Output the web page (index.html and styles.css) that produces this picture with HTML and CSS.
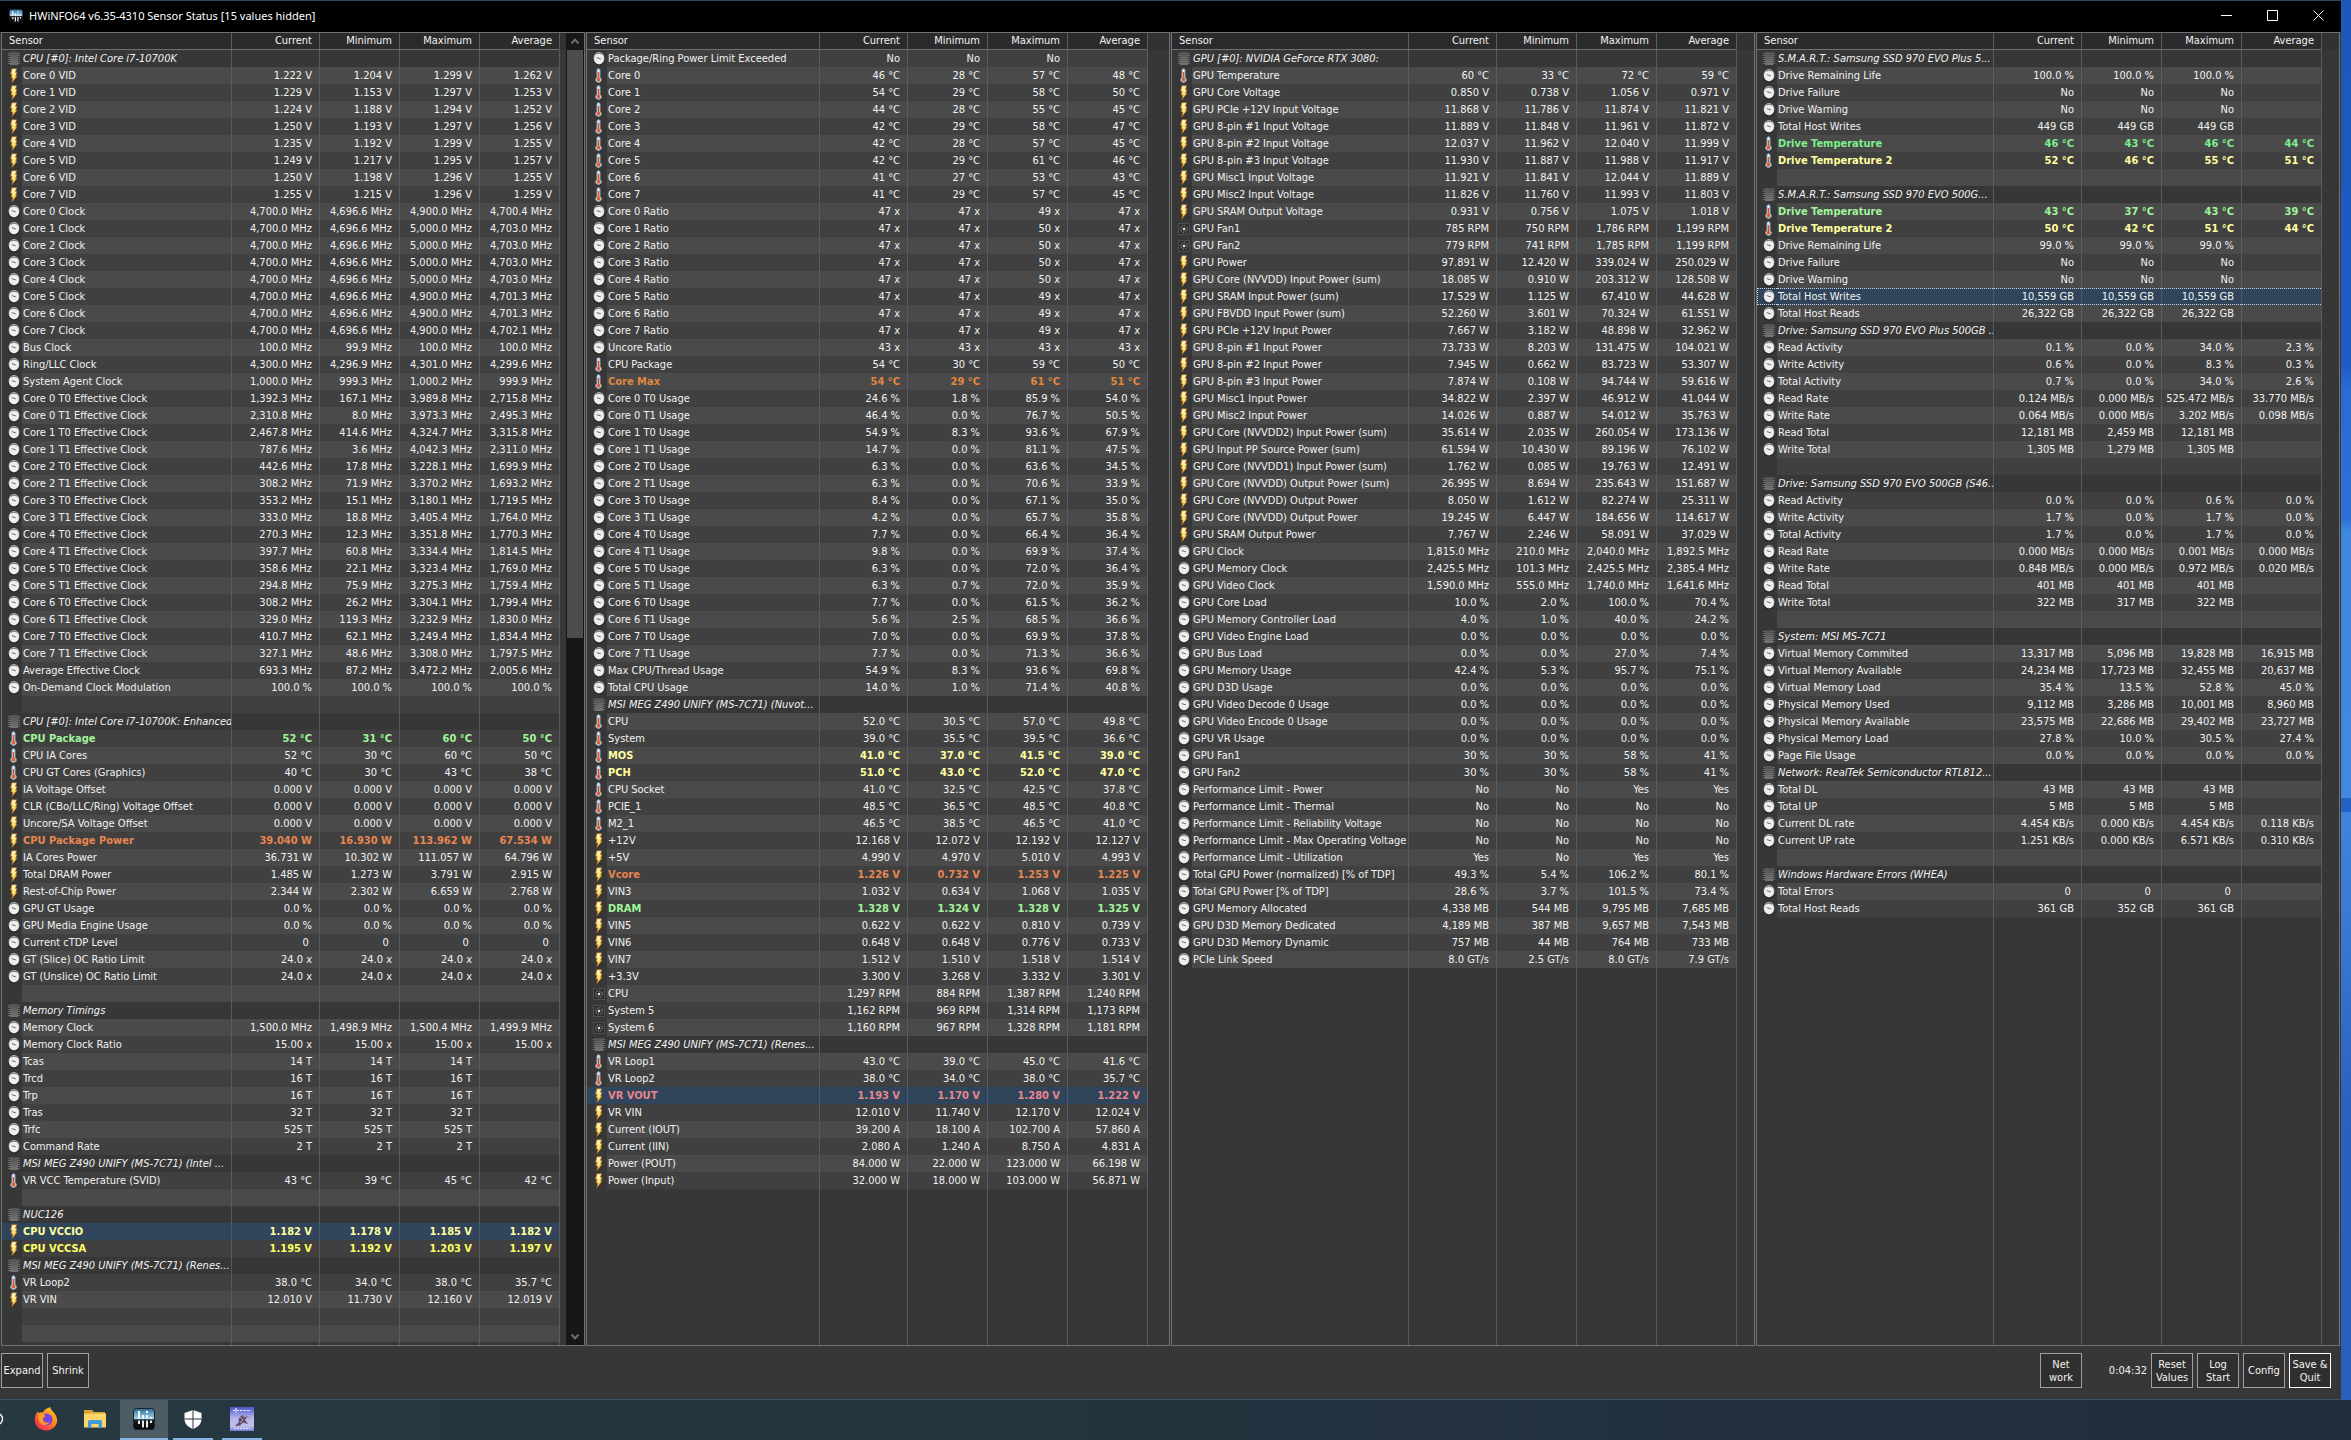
FILE: index.html
```html
<!DOCTYPE html>
<html lang="en">
<head>
<meta charset="utf-8">
<title>HWiNFO64 v6.35-4310 Sensor Status</title>
<link rel="stylesheet" href="styles.css">
</head>
<body>
<svg class="sprite" aria-hidden="true">
  <defs>
    <linearGradient id="bolt-fill" x1="0" y1="0" x2="0" y2="1"><stop offset="0" stop-color="#fff8c0"/><stop offset="1" stop-color="#ffd630"/></linearGradient>
    <linearGradient id="chip-fill" x1="0" y1="0" x2="0" y2="1"><stop offset="0" stop-color="#525252"/><stop offset="1" stop-color="#747474"/></linearGradient>
    <linearGradient id="app-fill" x1="0" y1="0" x2="0" y2="1"><stop offset="0" stop-color="#2c6a94"/><stop offset=".48" stop-color="#a4d2ec"/><stop offset=".54" stop-color="#1a1f24"/><stop offset="1" stop-color="#050505"/></linearGradient>
    <linearGradient id="fox-fill" x1="1" y1="0" x2=".2" y2="1"><stop offset="0" stop-color="#ffe226"/><stop offset=".45" stop-color="#ff8a1c"/><stop offset="1" stop-color="#f0245e"/></linearGradient>
    <linearGradient id="art-fill" x1="0" y1="0" x2="0" y2="1"><stop offset="0" stop-color="#4a56c8"/><stop offset=".45" stop-color="#b6b4ec"/><stop offset=".8" stop-color="#c4bfe8"/><stop offset="1" stop-color="#6f7ce0"/></linearGradient>
  </defs>
  <symbol id="i-clock" viewBox="0 0 12 15">
    <ellipse cx="6" cy="8" rx="6" ry="6.600" fill="#262626"/>
    <ellipse cx="6" cy="7.200" rx="5.400" ry="6.200" fill="#bcbcbc"/>
    <ellipse cx="6" cy="7.800" rx="4.700" ry="5.200" fill="#efefef"/>
    <path d="M3 3Q6 1.600 9 3" stroke="#6a6a6a" stroke-width=".8" fill="none"/>
    <path d="M3.800 6.600 7.800 7.900" stroke="#666" stroke-width="1"/>
  </symbol>
  <symbol id="i-bolt" viewBox="0 0 12 15">
    <path d="M3.900.7H8.600L7.500 4.400H9L7.700 8.200H9L4 14.600 4.800 9.900H3.100L4 6.200H2.500Z" fill="url(#bolt-fill)" stroke="#b0682a" stroke-width=".7"/>
  </symbol>
  <symbol id="i-temp" viewBox="0 0 12 15">
    <path d="M4 1.500Q5.500 0 7 1.500V9.400Q9 11 8 13.200 5.500 15.600 3 13.200 2 11 4 9.400Z" fill="#e6eef4" stroke="#87abc9" stroke-width="1"/>
    <path d="M5.500 4V10" stroke="#e0531f" stroke-width="1.500"/><circle cx="5.500" cy="11.700" r="1.900" fill="#e0602c"/>
  </symbol>
  <symbol id="i-chip" viewBox="0 0 12 15">
    <path d="M1 2V14M11 2V14" stroke="#8e8e8e" stroke-width="1.200" stroke-dasharray="1 1"/>
    <rect x="2" y="1" width="8" height="13" fill="url(#chip-fill)"/>
  </symbol>
  <symbol id="i-fan" viewBox="0 0 12 15">
    <rect x=".5" y="2.500" width="11" height="11" fill="#2f2f2f" stroke="#6a6a6a" stroke-dasharray="1 1"/>
    <circle cx="6" cy="8" r="3.300" fill="none" stroke="#8a8a8a" stroke-width="1.400" stroke-dasharray="1 1.590"/>
    <circle cx="6" cy="8" r="1.300" fill="#f0dede"/>
  </symbol>
  <symbol id="i-app" viewBox="0 0 22 22">
    <rect x=".5" y=".5" width="21" height="21" rx="3" fill="url(#app-fill)" stroke="#16242e"/>
    <path d="M6 3V10.500M10 7V10.500M14 3V5M14 7V10.500M18 9V10.500" stroke="#fff" stroke-width="1.800"/>
    <path d="M6 12.500V16M10 12.500V19.500M14 12.500V19.500M18 12.500V15" stroke="#fff" stroke-width="1.800"/>
  </symbol>
</svg>

<div class="desktop">
  <main class="window">
    <header class="titlebar">
      <svg class="title-icon"><use href="#i-app"/></svg>
      <h1>HWiNFO64 v6.35-4310 Sensor Status [15 values hidden]</h1>
      <div class="caption">
        <button type="button" aria-label="Minimize"><svg viewBox="0 0 11 11"><path d="M0 5.500H11"/></svg></button>
        <button type="button" aria-label="Maximize"><svg viewBox="0 0 11 11"><path d="M.5.5H10.500V10.500H.5Z"/></svg></button>
        <button type="button" aria-label="Close"><svg viewBox="0 0 11 11"><path d="M.5.5 10.500 10.500M10.500.5.5 10.500"/></svg></button>
      </div>
    </header>

    <div class="panels">
      <section class="panel panel-first" id="panel-0">
        <div class="scrollbar">
          <svg class="arrow" viewBox="0 0 17 17"><path d="M5 10.500 8.500 6.500 12 10.500"/></svg>
          <div class="track"><div class="thumb"></div></div>
          <svg class="arrow" viewBox="0 0 17 17"><path d="M5 6.500 8.500 10.500 12 6.500"/></svg>
        </div>
      </section>
      <section class="panel panel-second" id="panel-1"></section>
      <section class="panel" id="panel-2"></section>
      <section class="panel" id="panel-3"></section>
    </div>

    <footer class="toolbar">
      <button type="button">Expand</button>
      <button type="button">Shrink</button>
      <button type="button" class="network">Net<br>work</button>
      <time class="elapsed">0:04:32</time>
      <button type="button">Reset<br>Values</button>
      <button type="button">Log<br>Start</button>
      <button type="button">Config</button>
      <button type="button" class="primary">Save &amp;<br>Quit</button>
    </footer>
  </main>
</div>

<nav class="taskbar">
  <button type="button" class="search" aria-label="Search"><svg viewBox="0 0 4 12"><circle cx="-3" cy="6" r="5.500" fill="none" stroke="#fff" stroke-width="1.400"/></svg></button>
  <button type="button" aria-label="Firefox"><svg viewBox="0 0 24 24">
    <path d="M12 2C14 1 15 .5 16.500 0 16 3 21 5 22.500 10 25 18 19 23.500 12 23.500 5 23.500.5 18.500.8 12.500 1 9 2 6.500 3.500 4.500 4 5 4.500 5.500 5 6.500 6.500 5 8 5 9 5.500 9.500 4 10.500 2.800 12 2Z" fill="url(#fox-fill)"/>
    <circle cx="12.500" cy="12.500" r="6" fill="#7542e5"/><path d="M4 6C8 5 11 7.500 11.500 9.500 9 10 8.500 12 9.500 14 11 16 14 16 16 14 14 19 8 19.500 5.500 15 4 12 4 9 4 6Z" fill="#ff9a22"/>
  </svg></button>
  <button type="button" aria-label="File Explorer"><svg viewBox="0 0 24 24">
    <path d="M1 3H9L11 5H22V20H1Z" fill="#d9a136"/><path d="M1 6.500H23V20.500H1Z" fill="#fbd76a"/><path d="M5 21V14.500Q5 13 6.500 13H17.500Q19 13 19 14.500V21H15.500V17H8.500V21Z" fill="#4597d8"/>
  </svg></button>
  <button type="button" class="active" aria-label="HWiNFO64"><svg><use href="#i-app"/></svg></button>
  <button type="button" class="running" aria-label="Windows Security"><svg viewBox="0 0 24 24">
    <path d="M12 3 20.500 6V12C20.500 17 17 20 12 22 7 20 3.500 17 3.500 12V6Z" fill="#fff"/><path d="M12 3V22M3.500 12H20.500" stroke="#24343f" stroke-width="1"/>
  </svg></button>
  <button type="button" class="running" aria-label="Game"><svg viewBox="0 0 24 24">
    <rect width="24" height="24" fill="url(#art-fill)"/><path d="M3 3.500H21M6 1V6" stroke="#e8ecff" stroke-width="1.200" stroke-dasharray="2.500 1"/><path d="M5 19 9 15 8.500 12 11 9 13 8 14 10.500 18 9 15 13 18 17 13 15.500 10 18.500Z" fill="#5a4b6c"/><path d="M10.500 10 13 13 10 16M18 8 19.500 13" stroke="#c79a94" fill="none"/><path d="M4 21.500H20" stroke="#e8ecff" stroke-dasharray="2 1"/>
  </svg></button>
</nav>
<script src="app.js"></script>
</body>
</html>
```
FILE: styles.css
```css
* { box-sizing: border-box; }

body {
  margin: 0;
  min-height: 100vh;
  display: flex;
  flex-direction: column;
  background: #24343f;
  color: #f2f2f2;
  font: 11px/17px "DejaVu Sans Condensed", "DejaVu Sans", sans-serif;
}

button { font: inherit; color: inherit; padding: 0; border: 0; background: none; }

.sprite { position: absolute; width: 0; height: 0; }

.desktop {
  flex: 1;
  display: flex;
  padding-right: 10px;
  background: linear-gradient(#1d57b8 0, #1f5cc4 26%, #2a6cd2 28%, #2c70d6 37%, #3f88de 38%, #4089de 57%, #2560c4 57%, #2560c4 58%, #3f84dc 58%, #3a78d4 66%, #2a60be 80%, #2a5fbc 100%);
}

.window {
  flex: 1;
  min-width: 0;
  display: flex;
  flex-direction: column;
  background: #373737;
  border-top: 1px solid #2c4a5a;
  border-bottom: 1px solid #3c5666;
}

.titlebar {
  display: flex;
  align-items: center;
  height: 31px;
  padding: 0 0 2px 9px;
  background: #000;
  font-family: "Noto Sans", "Open Sans", sans-serif;
}
.titlebar h1 { margin: 0 0 0 6px; font-size: 11px; font-weight: 400; color: #fff; }
.title-icon { width: 14px; height: 14px; }
.caption { display: flex; margin-left: auto; }
.caption button { width: 46px; height: 28px; display: grid; place-items: center; }
.caption svg { width: 11px; height: 11px; fill: none; stroke: #fff; }

.panels {
  flex: 1;
  display: grid;
  grid-template-columns: repeat(4, minmax(0, 1fr));
  gap: 1px;
  padding: 0 1px;
}
.panel {
  display: flex;
  border: 1px solid #707274;
  min-width: 0;
}

.sensors {
  flex: 1;
  width: 100%;
  min-width: 0;
  table-layout: fixed;
  border-spacing: 0;
  --name: 216px;
}
.panel-first .sensors { --name: 209px; }
.panel-second .sensors { --name: 212px; }
.col-icon { width: 20px; }
.col-name { width: var(--name); }
.col-current { width: 88px; }
.col-value { width: 80px; }

.sensors th, .sensors td {
  height: 17px;
  padding: 0 7px 0 0;
  text-align: right;
  font-weight: 400;
  white-space: nowrap;
  overflow: hidden;
  border-left: 1px solid #585c60;
}
.sensors thead th { background: #2b2b2b; border-bottom: 1px solid #707070; line-height: 16px; }
.sensors thead th:first-child { padding-left: 7px; text-align: left; border-left: 0; }
.sensors thead th:last-child { background: #323232; border-bottom-color: #323232; }

.sensors tbody .icon { padding: 0 0 0 6px; border-left: 0; }
.icon svg { display: block; width: 12px; height: 15px; }
.sensors tbody .name { padding: 0 0 0 1px; text-align: left; border-left: 0; }

.sensors .stripe-a td:not(.icon, .rest) { background: #404040; }
.sensors .stripe-b td:not(.icon, .rest) { background: #4a4a4a; }
.sensors .group td { background: #373737; }
.group .name { font-style: italic; }
.sensors .selected td:not(.rest) { background: #30455b; border-left-color: #48596c; }
.sensors .focused td:not(.rest) { border-top: 1px dotted #c8d4e0; border-bottom: 1px dotted #c8d4e0; line-height: 15px; }
.sensors tbody .focused .icon { border-left: 1px dotted #c8d4e0; padding-left: 5px; }
.focused .icon svg { height: 15px; }
.sensors .filler td { height: auto; }

.green td, .lime td, .yellow td, .pale td, .orange td, .amber td, .pink td { font-weight: 700 !important; }
.green td { color: #7cf08c; }
.lime td { color: #a0f59a; }
.yellow td { color: #ffff64; }
.pale td { color: #ffffa0; }
.orange td { color: #e88652; }
.amber td { color: #e0883e; }
.pink td { color: #e8858c; }

.scrollbar { order: 2; flex: none; width: 18px; display: flex; flex-direction: column; background: #171717; }
.arrow { height: 17px; fill: none; stroke: #6c6c6c; stroke-width: 2; }
.track { flex: 1; padding: 0 1px; }
.thumb { height: 46%; background: #4d4d4d; }

.toolbar {
  display: flex;
  align-items: center;
  gap: 4px;
  padding: 7px 10px 11px 1px;
}
.toolbar button {
  flex: none;
  width: 42px;
  height: 35px;
  line-height: 13px;
  white-space: nowrap;
  background: #2f2f2f;
  border: 1px solid #a0a0a0;
}
.toolbar .primary { border-color: #fff; }
.toolbar .network { margin-left: auto; }
.elapsed { width: 61px; text-align: right; }

.taskbar {
  display: flex;
  gap: 1px;
  height: 40px;
  background: linear-gradient(90deg, #263840, #24343f 50%, #202c3c);
}
.taskbar button { width: 48px; display: grid; place-items: center; border-bottom: 2px solid transparent; }
.taskbar svg { width: 24px; height: 24px; }
.taskbar .search { width: 21px; justify-items: start; }
.taskbar .search svg { width: 4px; height: 12px; }
.taskbar .active { background: #4c5c62; border-bottom-color: #86b4e4; }
.taskbar .active svg { width: 22px; height: 22px; }
.taskbar .running { width: 40px; margin: 0 4px; border-bottom-color: #86b4e4; }
```
FILE: app.js
```
// One line per row: kind|name|current|minimum|maximum|average|classes
// kinds: g group heading, c clock, v voltage or power, t temperature, f fan, - blank
const panels = [`
g|CPU [#0]: Intel Core i7-10700K
v|Core 0 VID|1.222 V|1.204 V|1.299 V|1.262 V
v|Core 1 VID|1.229 V|1.153 V|1.297 V|1.253 V
v|Core 2 VID|1.224 V|1.188 V|1.294 V|1.252 V
v|Core 3 VID|1.250 V|1.193 V|1.297 V|1.256 V
v|Core 4 VID|1.235 V|1.192 V|1.299 V|1.255 V
v|Core 5 VID|1.249 V|1.217 V|1.295 V|1.257 V
v|Core 6 VID|1.250 V|1.198 V|1.296 V|1.255 V
v|Core 7 VID|1.255 V|1.215 V|1.296 V|1.259 V
c|Core 0 Clock|4,700.0 MHz|4,696.6 MHz|4,900.0 MHz|4,700.4 MHz
c|Core 1 Clock|4,700.0 MHz|4,696.6 MHz|5,000.0 MHz|4,703.0 MHz
c|Core 2 Clock|4,700.0 MHz|4,696.6 MHz|5,000.0 MHz|4,703.0 MHz
c|Core 3 Clock|4,700.0 MHz|4,696.6 MHz|5,000.0 MHz|4,703.0 MHz
c|Core 4 Clock|4,700.0 MHz|4,696.6 MHz|5,000.0 MHz|4,703.0 MHz
c|Core 5 Clock|4,700.0 MHz|4,696.6 MHz|4,900.0 MHz|4,701.3 MHz
c|Core 6 Clock|4,700.0 MHz|4,696.6 MHz|4,900.0 MHz|4,701.3 MHz
c|Core 7 Clock|4,700.0 MHz|4,696.6 MHz|4,900.0 MHz|4,702.1 MHz
c|Bus Clock|100.0 MHz|99.9 MHz|100.0 MHz|100.0 MHz
c|Ring/LLC Clock|4,300.0 MHz|4,296.9 MHz|4,301.0 MHz|4,299.6 MHz
c|System Agent Clock|1,000.0 MHz|999.3 MHz|1,000.2 MHz|999.9 MHz
c|Core 0 T0 Effective Clock|1,392.3 MHz|167.1 MHz|3,989.8 MHz|2,715.8 MHz
c|Core 0 T1 Effective Clock|2,310.8 MHz|8.0 MHz|3,973.3 MHz|2,495.3 MHz
c|Core 1 T0 Effective Clock|2,467.8 MHz|414.6 MHz|4,324.7 MHz|3,315.8 MHz
c|Core 1 T1 Effective Clock|787.6 MHz|3.6 MHz|4,042.3 MHz|2,311.0 MHz
c|Core 2 T0 Effective Clock|442.6 MHz|17.8 MHz|3,228.1 MHz|1,699.9 MHz
c|Core 2 T1 Effective Clock|308.2 MHz|71.9 MHz|3,370.2 MHz|1,693.2 MHz
c|Core 3 T0 Effective Clock|353.2 MHz|15.1 MHz|3,180.1 MHz|1,719.5 MHz
c|Core 3 T1 Effective Clock|333.0 MHz|18.8 MHz|3,405.4 MHz|1,764.0 MHz
c|Core 4 T0 Effective Clock|270.3 MHz|12.3 MHz|3,351.8 MHz|1,770.3 MHz
c|Core 4 T1 Effective Clock|397.7 MHz|60.8 MHz|3,334.4 MHz|1,814.5 MHz
c|Core 5 T0 Effective Clock|358.6 MHz|22.1 MHz|3,323.4 MHz|1,769.0 MHz
c|Core 5 T1 Effective Clock|294.8 MHz|75.9 MHz|3,275.3 MHz|1,759.4 MHz
c|Core 6 T0 Effective Clock|308.2 MHz|26.2 MHz|3,304.1 MHz|1,799.4 MHz
c|Core 6 T1 Effective Clock|329.0 MHz|119.3 MHz|3,232.9 MHz|1,830.0 MHz
c|Core 7 T0 Effective Clock|410.7 MHz|62.1 MHz|3,249.4 MHz|1,834.4 MHz
c|Core 7 T1 Effective Clock|327.1 MHz|48.6 MHz|3,308.0 MHz|1,797.5 MHz
c|Average Effective Clock|693.3 MHz|87.2 MHz|3,472.2 MHz|2,005.6 MHz
c|On-Demand Clock Modulation|100.0 %|100.0 %|100.0 %|100.0 %
-
g|CPU [#0]: Intel Core i7-10700K: Enhanced
t|CPU Package|52 °C|31 °C|60 °C|50 °C|lime
t|CPU IA Cores|52 °C|30 °C|60 °C|50 °C
t|CPU GT Cores (Graphics)|40 °C|30 °C|43 °C|38 °C
v|IA Voltage Offset|0.000 V|0.000 V|0.000 V|0.000 V
v|CLR (CBo/LLC/Ring) Voltage Offset|0.000 V|0.000 V|0.000 V|0.000 V
v|Uncore/SA Voltage Offset|0.000 V|0.000 V|0.000 V|0.000 V
v|CPU Package Power|39.040 W|16.930 W|113.962 W|67.534 W|orange
v|IA Cores Power|36.731 W|10.302 W|111.057 W|64.796 W
v|Total DRAM Power|1.485 W|1.273 W|3.791 W|2.915 W
v|Rest-of-Chip Power|2.344 W|2.302 W|6.659 W|2.768 W
c|GPU GT Usage|0.0 %|0.0 %|0.0 %|0.0 %
c|GPU Media Engine Usage|0.0 %|0.0 %|0.0 %|0.0 %
c|Current cTDP Level|0&nbsp;|0&nbsp;|0&nbsp;|0&nbsp;
c|GT (Slice) OC Ratio Limit|24.0 x|24.0 x|24.0 x|24.0 x
c|GT (Unslice) OC Ratio Limit|24.0 x|24.0 x|24.0 x|24.0 x
-
g|Memory Timings
c|Memory Clock|1,500.0 MHz|1,498.9 MHz|1,500.4 MHz|1,499.9 MHz
c|Memory Clock Ratio|15.00 x|15.00 x|15.00 x|15.00 x
c|Tcas|14 T|14 T|14 T|
c|Trcd|16 T|16 T|16 T|
c|Trp|16 T|16 T|16 T|
c|Tras|32 T|32 T|32 T|
c|Trfc|525 T|525 T|525 T|
c|Command Rate|2 T|2 T|2 T|
g|MSI MEG Z490 UNIFY (MS-7C71) (Intel ...
t|VR VCC Temperature (SVID)|43 °C|39 °C|45 °C|42 °C
-
g|NUC126
v|CPU VCCIO|1.182 V|1.178 V|1.185 V|1.182 V|pale selected
v|CPU VCCSA|1.195 V|1.192 V|1.203 V|1.197 V|yellow
g|MSI MEG Z490 UNIFY (MS-7C71) (Renes...
t|VR Loop2|38.0 °C|34.0 °C|38.0 °C|35.7 °C
v|VR VIN|12.010 V|11.730 V|12.160 V|12.019 V
-
-`, `
c|Package/Ring Power Limit Exceeded|No|No|No|
t|Core 0|46 °C|28 °C|57 °C|48 °C
t|Core 1|54 °C|29 °C|58 °C|50 °C
t|Core 2|44 °C|28 °C|55 °C|45 °C
t|Core 3|42 °C|29 °C|58 °C|47 °C
t|Core 4|42 °C|28 °C|57 °C|45 °C
t|Core 5|42 °C|29 °C|61 °C|46 °C
t|Core 6|41 °C|27 °C|53 °C|43 °C
t|Core 7|41 °C|29 °C|57 °C|45 °C
c|Core 0 Ratio|47 x|47 x|49 x|47 x
c|Core 1 Ratio|47 x|47 x|50 x|47 x
c|Core 2 Ratio|47 x|47 x|50 x|47 x
c|Core 3 Ratio|47 x|47 x|50 x|47 x
c|Core 4 Ratio|47 x|47 x|50 x|47 x
c|Core 5 Ratio|47 x|47 x|49 x|47 x
c|Core 6 Ratio|47 x|47 x|49 x|47 x
c|Core 7 Ratio|47 x|47 x|49 x|47 x
c|Uncore Ratio|43 x|43 x|43 x|43 x
t|CPU Package|54 °C|30 °C|59 °C|50 °C
t|Core Max|54 °C|29 °C|61 °C|51 °C|amber
c|Core 0 T0 Usage|24.6 %|1.8 %|85.9 %|54.0 %
c|Core 0 T1 Usage|46.4 %|0.0 %|76.7 %|50.5 %
c|Core 1 T0 Usage|54.9 %|8.3 %|93.6 %|67.9 %
c|Core 1 T1 Usage|14.7 %|0.0 %|81.1 %|47.5 %
c|Core 2 T0 Usage|6.3 %|0.0 %|63.6 %|34.5 %
c|Core 2 T1 Usage|6.3 %|0.0 %|70.6 %|33.9 %
c|Core 3 T0 Usage|8.4 %|0.0 %|67.1 %|35.0 %
c|Core 3 T1 Usage|4.2 %|0.0 %|65.7 %|35.8 %
c|Core 4 T0 Usage|7.7 %|0.0 %|66.4 %|36.4 %
c|Core 4 T1 Usage|9.8 %|0.0 %|69.9 %|37.4 %
c|Core 5 T0 Usage|6.3 %|0.0 %|72.0 %|36.4 %
c|Core 5 T1 Usage|6.3 %|0.7 %|72.0 %|35.9 %
c|Core 6 T0 Usage|7.7 %|0.0 %|61.5 %|36.2 %
c|Core 6 T1 Usage|5.6 %|2.5 %|68.5 %|36.6 %
c|Core 7 T0 Usage|7.0 %|0.0 %|69.9 %|37.8 %
c|Core 7 T1 Usage|7.7 %|0.0 %|71.3 %|36.6 %
c|Max CPU/Thread Usage|54.9 %|8.3 %|93.6 %|69.8 %
c|Total CPU Usage|14.0 %|1.0 %|71.4 %|40.8 %
g|MSI MEG Z490 UNIFY (MS-7C71) (Nuvot...
t|CPU|52.0 °C|30.5 °C|57.0 °C|49.8 °C
t|System|39.0 °C|35.5 °C|39.5 °C|36.6 °C
t|MOS|41.0 °C|37.0 °C|41.5 °C|39.0 °C|pale
t|PCH|51.0 °C|43.0 °C|52.0 °C|47.0 °C|pale
t|CPU Socket|41.0 °C|32.5 °C|42.5 °C|37.8 °C
t|PCIE_1|48.5 °C|36.5 °C|48.5 °C|40.8 °C
t|M2_1|46.5 °C|38.5 °C|46.5 °C|41.0 °C
v|+12V|12.168 V|12.072 V|12.192 V|12.127 V
v|+5V|4.990 V|4.970 V|5.010 V|4.993 V
v|Vcore|1.226 V|0.732 V|1.253 V|1.225 V|orange
v|VIN3|1.032 V|0.634 V|1.068 V|1.035 V
v|DRAM|1.328 V|1.324 V|1.328 V|1.325 V|lime
v|VIN5|0.622 V|0.622 V|0.810 V|0.739 V
v|VIN6|0.648 V|0.648 V|0.776 V|0.733 V
v|VIN7|1.512 V|1.510 V|1.518 V|1.514 V
v|+3.3V|3.300 V|3.268 V|3.332 V|3.301 V
f|CPU|1,297 RPM|884 RPM|1,387 RPM|1,240 RPM
f|System 5|1,162 RPM|969 RPM|1,314 RPM|1,173 RPM
f|System 6|1,160 RPM|967 RPM|1,328 RPM|1,181 RPM
g|MSI MEG Z490 UNIFY (MS-7C71) (Renes...
t|VR Loop1|43.0 °C|39.0 °C|45.0 °C|41.6 °C
t|VR Loop2|38.0 °C|34.0 °C|38.0 °C|35.7 °C
v|VR VOUT|1.193 V|1.170 V|1.280 V|1.222 V|pink selected
v|VR VIN|12.010 V|11.740 V|12.170 V|12.024 V
v|Current (IOUT)|39.200 A|18.100 A|102.700 A|57.860 A
v|Current (IIN)|2.080 A|1.240 A|8.750 A|4.831 A
v|Power (POUT)|84.000 W|22.000 W|123.000 W|66.198 W
v|Power (Input)|32.000 W|18.000 W|103.000 W|56.871 W`, `
g|GPU [#0]: NVIDIA GeForce RTX 3080:
t|GPU Temperature|60 °C|33 °C|72 °C|59 °C
v|GPU Core Voltage|0.850 V|0.738 V|1.056 V|0.971 V
v|GPU PCIe +12V Input Voltage|11.868 V|11.786 V|11.874 V|11.821 V
v|GPU 8-pin #1 Input Voltage|11.889 V|11.848 V|11.961 V|11.872 V
v|GPU 8-pin #2 Input Voltage|12.037 V|11.962 V|12.040 V|11.999 V
v|GPU 8-pin #3 Input Voltage|11.930 V|11.887 V|11.988 V|11.917 V
v|GPU Misc1 Input Voltage|11.921 V|11.841 V|12.044 V|11.889 V
v|GPU Misc2 Input Voltage|11.826 V|11.760 V|11.993 V|11.803 V
v|GPU SRAM Output Voltage|0.931 V|0.756 V|1.075 V|1.018 V
f|GPU Fan1|785 RPM|750 RPM|1,786 RPM|1,199 RPM
f|GPU Fan2|779 RPM|741 RPM|1,785 RPM|1,199 RPM
v|GPU Power|97.891 W|12.420 W|339.024 W|250.029 W
v|GPU Core (NVVDD) Input Power (sum)|18.085 W|0.910 W|203.312 W|128.508 W
v|GPU SRAM Input Power (sum)|17.529 W|1.125 W|67.410 W|44.628 W
v|GPU FBVDD Input Power (sum)|52.260 W|3.601 W|70.324 W|61.551 W
v|GPU PCIe +12V Input Power|7.667 W|3.182 W|48.898 W|32.962 W
v|GPU 8-pin #1 Input Power|73.733 W|8.203 W|131.475 W|104.021 W
v|GPU 8-pin #2 Input Power|7.945 W|0.662 W|83.723 W|53.307 W
v|GPU 8-pin #3 Input Power|7.874 W|0.108 W|94.744 W|59.616 W
v|GPU Misc1 Input Power|34.822 W|2.397 W|46.912 W|41.044 W
v|GPU Misc2 Input Power|14.026 W|0.887 W|54.012 W|35.763 W
v|GPU Core (NVVDD2) Input Power (sum)|35.614 W|2.035 W|260.054 W|173.136 W
v|GPU Input PP Source Power (sum)|61.594 W|10.430 W|89.196 W|76.102 W
v|GPU Core (NVVDD1) Input Power (sum)|1.762 W|0.085 W|19.763 W|12.491 W
v|GPU Core (NVVDD) Output Power (sum)|26.995 W|8.694 W|235.643 W|151.687 W
v|GPU Core (NVVDD) Output Power|8.050 W|1.612 W|82.274 W|25.311 W
v|GPU Core (NVVDD) Output Power|19.245 W|6.447 W|184.656 W|114.617 W
v|GPU SRAM Output Power|7.767 W|2.246 W|58.091 W|37.029 W
c|GPU Clock|1,815.0 MHz|210.0 MHz|2,040.0 MHz|1,892.5 MHz
c|GPU Memory Clock|2,425.5 MHz|101.3 MHz|2,425.5 MHz|2,385.4 MHz
c|GPU Video Clock|1,590.0 MHz|555.0 MHz|1,740.0 MHz|1,641.6 MHz
c|GPU Core Load|10.0 %|2.0 %|100.0 %|70.4 %
c|GPU Memory Controller Load|4.0 %|1.0 %|40.0 %|24.2 %
c|GPU Video Engine Load|0.0 %|0.0 %|0.0 %|0.0 %
c|GPU Bus Load|0.0 %|0.0 %|27.0 %|7.4 %
c|GPU Memory Usage|42.4 %|5.3 %|95.7 %|75.1 %
c|GPU D3D Usage|0.0 %|0.0 %|0.0 %|0.0 %
c|GPU Video Decode 0 Usage|0.0 %|0.0 %|0.0 %|0.0 %
c|GPU Video Encode 0 Usage|0.0 %|0.0 %|0.0 %|0.0 %
c|GPU VR Usage|0.0 %|0.0 %|0.0 %|0.0 %
c|GPU Fan1|30 %|30 %|58 %|41 %
c|GPU Fan2|30 %|30 %|58 %|41 %
c|Performance Limit - Power|No|No|Yes|Yes
c|Performance Limit - Thermal|No|No|No|No
c|Performance Limit - Reliability Voltage|No|No|No|No
c|Performance Limit - Max Operating Voltage|No|No|No|No
c|Performance Limit - Utilization|Yes|No|Yes|Yes
c|Total GPU Power (normalized) [% of TDP]|49.3 %|5.4 %|106.2 %|80.1 %
c|Total GPU Power [% of TDP]|28.6 %|3.7 %|101.5 %|73.4 %
c|GPU Memory Allocated|4,338 MB|544 MB|9,795 MB|7,685 MB
c|GPU D3D Memory Dedicated|4,189 MB|387 MB|9,657 MB|7,543 MB
c|GPU D3D Memory Dynamic|757 MB|44 MB|764 MB|733 MB
c|PCIe Link Speed|8.0 GT/s|2.5 GT/s|8.0 GT/s|7.9 GT/s`, `
g|S.M.A.R.T.: Samsung SSD 970 EVO Plus 5...
c|Drive Remaining Life|100.0 %|100.0 %|100.0 %|
c|Drive Failure|No|No|No|
c|Drive Warning|No|No|No|
c|Total Host Writes|449 GB|449 GB|449 GB|
t|Drive Temperature|46 °C|43 °C|46 °C|44 °C|green
t|Drive Temperature 2|52 °C|46 °C|55 °C|51 °C|pale
-
g|S.M.A.R.T.: Samsung SSD 970 EVO 500G...
t|Drive Temperature|43 °C|37 °C|43 °C|39 °C|lime
t|Drive Temperature 2|50 °C|42 °C|51 °C|44 °C|pale
c|Drive Remaining Life|99.0 %|99.0 %|99.0 %|
c|Drive Failure|No|No|No|
c|Drive Warning|No|No|No|
c|Total Host Writes|10,559 GB|10,559 GB|10,559 GB||selected focused
c|Total Host Reads|26,322 GB|26,322 GB|26,322 GB|
g|Drive: Samsung SSD 970 EVO Plus 500GB ...
c|Read Activity|0.1 %|0.0 %|34.0 %|2.3 %
c|Write Activity|0.6 %|0.0 %|8.3 %|0.3 %
c|Total Activity|0.7 %|0.0 %|34.0 %|2.6 %
c|Read Rate|0.124 MB/s|0.000 MB/s|525.472 MB/s|33.770 MB/s
c|Write Rate|0.064 MB/s|0.000 MB/s|3.202 MB/s|0.098 MB/s
c|Read Total|12,181 MB|2,459 MB|12,181 MB|
c|Write Total|1,305 MB|1,279 MB|1,305 MB|
-
g|Drive: Samsung SSD 970 EVO 500GB (S46...
c|Read Activity|0.0 %|0.0 %|0.6 %|0.0 %
c|Write Activity|1.7 %|0.0 %|1.7 %|0.0 %
c|Total Activity|1.7 %|0.0 %|1.7 %|0.0 %
c|Read Rate|0.000 MB/s|0.000 MB/s|0.001 MB/s|0.000 MB/s
c|Write Rate|0.848 MB/s|0.000 MB/s|0.972 MB/s|0.020 MB/s
c|Read Total|401 MB|401 MB|401 MB|
c|Write Total|322 MB|317 MB|322 MB|
-
g|System: MSI MS-7C71
c|Virtual Memory Commited|13,317 MB|5,096 MB|19,828 MB|16,915 MB
c|Virtual Memory Available|24,234 MB|17,723 MB|32,455 MB|20,637 MB
c|Virtual Memory Load|35.4 %|13.5 %|52.8 %|45.0 %
c|Physical Memory Used|9,112 MB|3,286 MB|10,001 MB|8,960 MB
c|Physical Memory Available|23,575 MB|22,686 MB|29,402 MB|23,727 MB
c|Physical Memory Load|27.8 %|10.0 %|30.5 %|27.4 %
c|Page File Usage|0.0 %|0.0 %|0.0 %|0.0 %
g|Network: RealTek Semiconductor RTL812...
c|Total DL|43 MB|43 MB|43 MB|
c|Total UP|5 MB|5 MB|5 MB|
c|Current DL rate|4.454 KB/s|0.000 KB/s|4.454 KB/s|0.118 KB/s
c|Current UP rate|1.251 KB/s|0.000 KB/s|6.571 KB/s|0.310 KB/s
-
g|Windows Hardware Errors (WHEA)
c|Total Errors|0&nbsp;|0&nbsp;|0&nbsp;|
c|Total Host Reads|361 GB|352 GB|361 GB|`];

const icons = { g: 'chip', c: 'clock', v: 'bolt', t: 'temp', f: 'fan' };

const row = (line, i) => {
  const [kind, name = '', ...rest] = line.split('|');
  const values = [0, 1, 2, 3].map(n => `<td>${rest[n] || ''}</td>`).join('');
  const stripe = i % 2 ? 'stripe-b' : 'stripe-a';
  const cls = kind === 'g' ? 'group' : `${stripe} ${rest[4] || ''}`.trim();
  const icon = icons[kind] ? `<svg><use href="#i-${icons[kind]}"/></svg>` : '';
  return `<tr class="${cls}"><td class="icon">${icon}</td><td class="name">${name}</td>${values}<td class="rest"></td></tr>`;
};

panels.forEach((text, n) => {
  const rows = text.trim().split('\n').map(row).join('');
  document.getElementById(`panel-${n}`).insertAdjacentHTML('afterbegin', `
<table class="sensors">
<colgroup><col class="col-icon"><col class="col-name"><col class="col-current"><col class="col-value"><col class="col-value"><col class="col-value"><col></colgroup>
<thead><tr><th colspan="2">Sensor</th><th>Current</th><th>Minimum</th><th>Maximum</th><th>Average</th><th></th></tr></thead>
<tbody>${rows}<tr class="filler"><td class="icon"></td><td class="name"></td><td></td><td></td><td></td><td></td><td class="rest"></td></tr></tbody>
</table>`);
});
```
